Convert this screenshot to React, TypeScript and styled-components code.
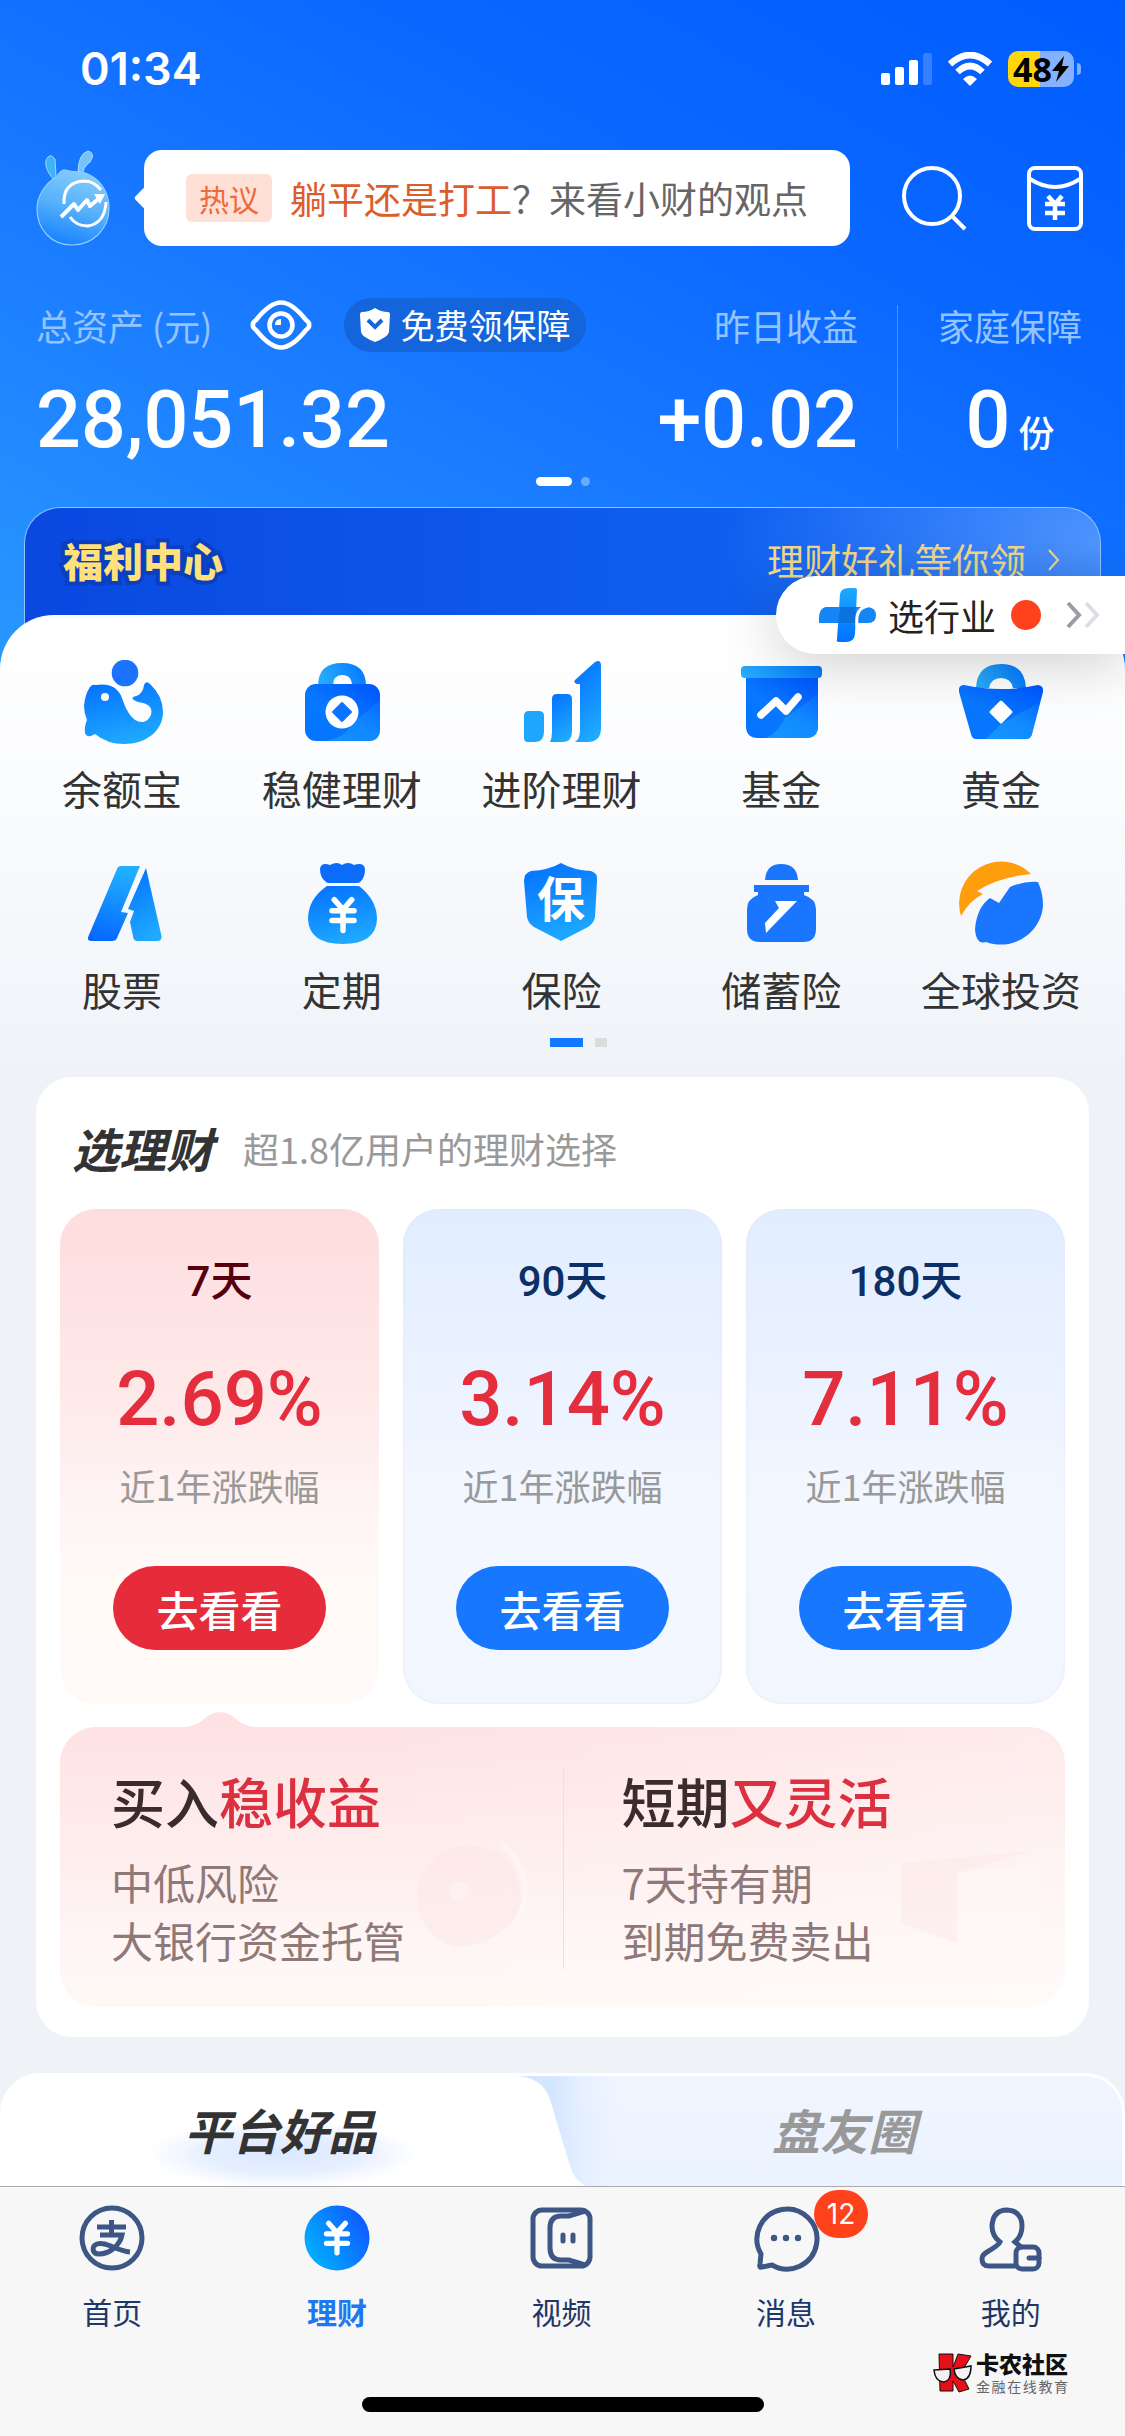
import React from 'react';
import styled, { createGlobalStyle, css } from 'styled-components';

const cjk = '"Noto Sans CJK SC", "Noto Sans", sans-serif';
const digits = 'Roboto, "Noto Sans CJK SC", sans-serif';

const GlobalStyle = createGlobalStyle`
  * { box-sizing: border-box; }
  body { margin: 0; background: #eff3f8; font-family: ${cjk}; color: #333; }
  button { font: inherit; color: inherit; border: 0; padding: 0; background: none; cursor: pointer; }
  a { color: inherit; text-decoration: none; }
  h2, h3, p { margin: 0; font-weight: inherit; }
  svg { display: block; flex: none; }
`;

const Page = styled.div`
  position: relative;
  min-height: 100vh;
  display: flex;
  flex-direction: column;
`;

/* ---------- header ---------- */

const Header = styled.header`
  background: linear-gradient(208deg, #005cff 0%, #0a68ff 32%, #1878ff 58%, #2a98ff 100%);
  color: #fff;
`;

const StatusBar = styled.div`
  height: 138px;
  padding: 0 44px 0 80px;
  display: flex;
  align-items: center;
  justify-content: space-between;
`;

const Clock = styled.span`
  font: 600 45px/48px Inter, sans-serif;
`;

const StatusIcons = styled.div`
  display: flex;
  align-items: center;
  gap: 15px;
`;

const Battery = styled.span`
  display: flex;
  align-items: center;
  gap: 3px;
  &::after {
    content: '';
    width: 4px;
    height: 12px;
    border-radius: 0 6px 6px 0;
    background: #7fb0ff;
  }
`;

const BatteryBody = styled.span`
  width: 66px;
  height: 36px;
  border-radius: 10px;
  display: flex;
  align-items: center;
  justify-content: center;
  background: linear-gradient(90deg, #ffd60a 48%, #86b1ff 48%);
  color: #000;
  font: 700 34px/36px "Open Sans", sans-serif;
`;

const TopRow = styled.div`
  margin-top: 12px;
  padding: 0 44px 0 36px;
  display: flex;
  align-items: center;
`;

const Bubble = styled.a`
  position: relative;
  flex: 1;
  height: 96px;
  margin: 0 52px 0 34px;
  padding: 0 42px;
  border-radius: 18px;
  background: #fff;
  display: flex;
  align-items: center;
  gap: 18px;
  font-size: 37px;
  line-height: 48px;
  color: #666;
  white-space: nowrap;
  &::before {
    content: '';
    position: absolute;
    left: -7px;
    top: 40px;
    width: 16px;
    height: 16px;
    border-radius: 3px;
    background: #fff;
    transform: rotate(45deg);
  }
`;

const HotTag = styled.span`
  width: 86px;
  height: 48px;
  border-radius: 6px;
  background: #ffe0d6;
  color: #ef6a3a;
  font-size: 30px;
  text-align: center;
`;

const Hot = styled.span`
  color: #db5d2c;
`;

const IconButton = styled.button`
  display: block;
  & + & { margin-left: 60px; }
`;

const Assets = styled.section`
  margin-top: 52px;
  padding: 0 43px 0 36px;
  display: flex;
`;

const AssetColumn = styled.div<{ $align?: string; $grow?: boolean }>`
  display: flex;
  flex-direction: column;
  gap: 32px;
  align-items: ${(p) => p.$align ?? 'flex-start'};
  ${(p) => p.$grow && css`flex: 1;`}
`;

const LabelRow = styled.div`
  height: 54px;
  display: flex;
  align-items: center;
  font-size: 36px;
  line-height: 54px;
  white-space: nowrap;
`;

const AssetLabel = styled.span`
  color: #94c4ff;
`;

const EyeButton = styled.button`
  margin: 0 32px 0 38px;
`;

const Protect = styled.a`
  height: 54px;
  padding: 0 16px;
  border-radius: 27px;
  background: #1465dc;
  display: flex;
  align-items: center;
  gap: 10px;
  font-size: 34px;
`;

const Amount = styled.div`
  height: 72px;
  font: 500 79px/72px ${digits};
  display: flex;
  align-items: baseline;
  gap: 8px;
`;

const Unit = styled.span`
  font-size: 36px;
`;

const AssetDivider = styled.div`
  width: 1px;
  height: 144px;
  margin: 7px 40px 0 39px;
  background: #4a90ff;
`;

const HeaderDots = styled.div`
  height: 9px;
  margin: 21px 0;
  display: flex;
  justify-content: center;
  gap: 9px;
`;

const HeaderDot = styled.i<{ $active?: boolean }>`
  width: ${(p) => (p.$active ? 36 : 9)}px;
  height: 9px;
  border-radius: 5px;
  background: ${(p) => (p.$active ? '#fff' : '#6aaaff')};
`;

const Banner = styled.a`
  height: 168px;
  margin: 0 24px;
  padding: 24px 40px 0 38px;
  border: 1px solid #8cc4ff;
  border-bottom: 0;
  border-radius: 36px 36px 0 0;
  background:
    radial-gradient(ellipse 380px 200px at 100% 20%, #4f96ff 0%, #2f7bf9 45%, transparent 100%),
    linear-gradient(90deg, #0a48e0 0%, #0f5dee 60%, #0f62f2 100%);
  display: flex;
  align-items: flex-start;
  justify-content: space-between;
`;

const BannerTitle = styled.h2`
  font-size: 40px;
  line-height: 56px;
  font-weight: 900;
  color: #ffe07a;
  -webkit-text-stroke: 8px #0a3fbf;
  paint-order: stroke fill;
`;

const BannerMore = styled.span`
  display: flex;
  align-items: center;
  gap: 22px;
  font-size: 37px;
  line-height: 56px;
  color: #f2d888;
`;

const FloatPill = styled.a`
  position: absolute;
  top: 576px;
  right: 0;
  height: 78px;
  padding: 0 24px 0 42px;
  border-radius: 39px 0 0 39px;
  background: #fff;
  box-shadow: 0 8px 60px rgba(0, 0, 0, 0.2);
  display: flex;
  align-items: center;
  font-size: 36px;
  line-height: 48px;
  color: #222;
`;

const PillText = styled.span`
  margin: 0 15px 0 11px;
`;

const RedDot = styled.i`
  width: 30px;
  height: 30px;
  margin-right: 24px;
  border-radius: 50%;
  background: #ff411c;
`;

/* ---------- shortcuts ---------- */

const Shortcuts = styled.section`
  margin-top: -60px;
  padding: 45px 14px 30px 12px;
  border-radius: 54px 54px 0 0;
  background: linear-gradient(180deg, #fff 0%, #fbfcfe 35%, #eff3f8 100%);
`;

const ShortcutGrid = styled.nav`
  display: grid;
  grid-template-columns: repeat(5, 1fr);
  row-gap: 49px;
`;

const Shortcut = styled.a`
  display: flex;
  flex-direction: column;
  align-items: center;
  gap: 20px;
  font-size: 40px;
  line-height: 48px;
  color: #333;
  white-space: nowrap;
`;

const Pager = styled.div`
  margin-top: 25px;
  padding-left: 34px;
  display: flex;
  justify-content: center;
  gap: 12px;
`;

const PagerMark = styled.i<{ $active?: boolean }>`
  width: ${(p) => (p.$active ? 33 : 12)}px;
  height: 9px;
  background: ${(p) => (p.$active ? '#1178ff' : '#dcdcdc')};
`;

/* ---------- picks card ---------- */

const Card = styled.section`
  margin: 0 36px;
  padding: 36px 24px 30px;
  border-radius: 36px;
  background: #fff;
`;

const CardHead = styled.div`
  height: 70px;
  margin-bottom: 26px;
  padding-left: 12px;
  display: flex;
  align-items: center;
  gap: 30px;
`;

const CardTitle = styled.h2`
  font-size: 47px;
  line-height: 56px;
  font-weight: 700;
  font-style: italic;
`;

const CardNote = styled.p`
  font-size: 36px;
  line-height: 48px;
  color: #999;
`;

const Terms = styled.div`
  display: grid;
  grid-template-columns: repeat(3, 1fr);
  gap: 24px;
`;

const Term = styled.article<{ $hot?: boolean }>`
  padding: 49px 0 54px;
  border-radius: 36px;
  background: ${(p) =>
    p.$hot
      ? 'linear-gradient(180deg, #fedddf 0%, #fee8e8 35%, #fef6f6 64%, #fffaf6 75%, #fffaf8 100%)'
      : 'linear-gradient(180deg, #e1edff 0%, #ebf2ff 32%, #f3f7ff 60%, #f2f6ff 100%)'};
  box-shadow: ${(p) => (p.$hot ? 'none' : 'inset 0 0 3px #dde5f4')};
  display: flex;
  flex-direction: column;
  align-items: center;
  color: ${(p) => (p.$hot ? '#55000c' : '#0b2f66')};
`;

const TermDays = styled.h3`
  font: 500 42px/48px ${digits};
`;

const TermRate = styled.p`
  margin: 57px 0 26px;
  font: 500 76px/72px ${digits};
  color: #e52e3d;
`;

const TermNote = styled.p`
  font-size: 36px;
  line-height: 48px;
  color: #999;
`;

const TermButton = styled.button<{ $hot?: boolean }>`
  width: 213px;
  height: 84px;
  margin-top: 57px;
  border-radius: 42px;
  background: ${(p) => (p.$hot ? '#e62c3b' : '#1777ff')};
  color: #fff;
  font-size: 42px;
  font-weight: 500;
`;

const Features = styled.div`
  position: relative;
  margin-top: 23px;
  padding: 42px 0 38px;
  border-radius: 36px;
  background:
    linear-gradient(90deg, rgba(255, 255, 255, 0) 30%, rgba(255, 255, 255, 0.3) 100%),
    linear-gradient(180deg, #fee2e3 0%, #feebeb 35%, #fef5f4 75%, #fff9f6 100%);
  display: grid;
  grid-template-columns: 1fr 1fr;
`;

const FeatureNotch = styled.svg`
  position: absolute;
  left: 118px;
  top: -15px;
`;

const Feature = styled.div`
  position: relative;
  padding-left: 51px;
  & + & {
    padding-left: 58px;
    border-left: 1px solid #f3dcdc;
  }
`;

const FeatureArt = styled.svg`
  position: absolute;
  right: 24px;
  top: 34px;
`;

const FeatureTitle = styled.h3`
  margin-bottom: 20px;
  font-size: 54px;
  line-height: 64px;
  font-weight: 500;
  color: #3a2c2c;
`;

const Accent = styled.span`
  color: #dc2f40;
`;

const FeatureLine = styled.p`
  font-size: 42px;
  line-height: 58px;
  color: #8f7878;
`;

/* ---------- tabs ---------- */

const Tabs = styled.div`
  flex: 1;
  min-height: 113px;
  margin-top: 36px;
  border: solid #fff;
  border-width: 3px 3px 0 0;
  border-radius: 40px 40px 0 0;
  background: linear-gradient(180deg, #f1f5ff 0%, #ebf3ff 100%);
  display: flex;
`;

const Tab = styled.button<{ $active?: boolean }>`
  font-size: 48px;
  font-weight: 700;
  font-style: italic;
  padding-bottom: 4px;
  ${(p) =>
    p.$active
      ? css`
          flex: 0 0 518px;
          padding-left: 42px;
          border-radius: 37px 0 0 0;
          color: #333;
          background: radial-gradient(ellipse 136px 34px at 282px 78px, #dbe8ff 0%, #e6efff 55%, #fff 100%) #fff;
        `
      : css`
          flex: 1;
          padding-right: 62px;
          color: #999;
        `}
`;

/* ---------- bottom bar ---------- */

const BottomBar = styled.footer`
  position: relative;
  height: 250px;
  padding-top: 17px;
  border-top: 1px solid #a9a9ae;
  background: #f7f7f7;
`;

const NavRow = styled.nav`
  padding-right: 2px;
  display: grid;
  grid-template-columns: repeat(5, 1fr);
`;

const NavItem = styled.a<{ $active?: boolean }>`
  position: relative;
  display: flex;
  flex-direction: column;
  align-items: center;
  gap: 21px;
  font-size: 30px;
  line-height: 36px;
  font-weight: ${(p) => (p.$active ? 700 : 400)};
  color: ${(p) => (p.$active ? '#1e78f0' : '#1f3766')};
`;

const Badge = styled.span`
  position: absolute;
  left: calc(50% + 28px);
  top: -14px;
  width: 54px;
  height: 48px;
  border-radius: 24px;
  background: #ff411c;
  color: #fff;
  font: 400 28px/48px Inter, sans-serif;
  text-align: center;
`;

const HomeBar = styled.div`
  width: 402px;
  height: 15px;
  margin: 68px auto 0;
  border-radius: 8px;
  background: #000;
`;

const Watermark = styled.div`
  position: absolute;
  right: 57px;
  bottom: 40px;
  display: flex;
  align-items: center;
  gap: 4px;
  color: #111;
`;

const WatermarkName = styled.div`
  font-size: 23px;
  line-height: 26px;
  font-weight: 900;
`;

const WatermarkNote = styled.div`
  font-size: 14px;
  line-height: 20px;
  color: #666;
  text-align: justify;
  text-align-last: justify;
`;

/* ---------- drawings ---------- */

const Yen = ({ x, y, s = 1, w = 5, color = '#fff' }: { x: number; y: number; s?: number; w?: number; color?: string }) => (
  <g transform={`translate(${x} ${y}) scale(${s})`} stroke={color} strokeWidth={w} fill="none" strokeLinecap="round">
    <path d="M-8 -13 L0 -4 L8 -13 M0 -4 V15 M-10 -3 H10 M-10 6 H10" />
  </g>
);

const Mascot = () => (
  <svg width="74" height="96" viewBox="0 0 74 96">
    <defs>
      <linearGradient id="mascot" x1="0.6" y1="0" x2="0.3" y2="1">
        <stop offset="0" stopColor="#86cdfb" />
        <stop offset="0.5" stopColor="#55b0fb" />
        <stop offset="1" stopColor="#1480ff" />
      </linearGradient>
    </defs>
    <path d="M20 32 Q8 20 10 10 Q14 2 19 9 Q20 20 20 32Z" fill="#3eb4f5" stroke="#9ad8ff" />
    <path d="M42 23 Q42 4 52 1 Q60 3 54 12 Q46 18 47 25Z" fill="#75c3f8" stroke="#a9dcff" />
    <path d="M20 27 Q26 19 29 20 Q36 22 46 22 C62 26 73 40 73 58 C73 80 56 95 36 95 C15 95 1 79 1 59 C1 46 9 34 20 27Z" fill="url(#mascot)" stroke="#8fd0ff" strokeWidth="1.2" />
    <path d="M28 54 Q27 32 48 31 Q58 31 65 40 M34 67 Q40 76 52 76 Q69 73 70 52" fill="none" stroke="#fff" strokeWidth="3" />
    <path d="M25 67 L38 54 L42 60 L51 50 L54 56 L66 46" fill="none" stroke="#fff" strokeWidth="4" strokeLinejoin="round" />
    <path d="M58 44 L69 44 L64 54Z" fill="#fff" />
  </svg>
);

const Signal = () => (
  <svg width="51" height="32" viewBox="0 0 51 32" fill="#fff">
    <rect x="0" y="20" width="9" height="12" rx="2" />
    <rect x="14" y="14" width="9" height="18" rx="2" />
    <rect x="28" y="7" width="9" height="25" rx="2" />
    <rect x="42" y="0" width="9" height="32" rx="2" opacity="0.2" />
  </svg>
);

const Wifi = () => (
  <svg width="46" height="34" viewBox="0 0 46 34">
    <path d="M3 12 Q23 -6 43 12 M10.500 20 Q23 8 35.500 20" fill="none" stroke="#fff" strokeWidth="6.500" />
    <path d="M16 27 Q23 20 30 27 L23 34Z" fill="#fff" />
  </svg>
);

const Bolt = () => (
  <svg width="17" height="28" viewBox="0 0 17 28">
    <path d="M12 1 L0 16 H7 L4 27 L17 11 H10Z" fill="#000" />
  </svg>
);

const SearchIcon = () => (
  <svg width="65" height="65" viewBox="0 0 65 65" fill="none" stroke="#fff" strokeWidth="4">
    <circle cx="30" cy="30" r="28" />
    <path d="M50 50 L63 63" />
  </svg>
);

const WalletIcon = () => (
  <svg width="56" height="65" viewBox="0 0 56 65" fill="none" stroke="#fff" strokeWidth="4">
    <rect x="2" y="2" width="52" height="61" rx="6" />
    <path d="M3 13 Q28 29 53 13" />
    <path d="M21 30 L28 38 L35 30 M28 38 V54 M18 38 H38 M18 47 H38" strokeWidth="4.500" />
  </svg>
);

const EyeIcon = () => (
  <svg width="62" height="50" viewBox="0 0 62 50" fill="none" stroke="#fff" strokeWidth="4.500">
    <path d="M3 25 Q2 23 6 20 Q20 2.500 31 2.500 Q42 2.500 56 20 Q60 23 59 25 Q60 27 56 30 Q42 47.500 31 47.500 Q20 47.500 6 30 Q2 27 3 25Z" />
    <circle cx="31" cy="25" r="11.500" />
    <path d="M25 25 Q25 19 31 19 V25Z" fill="#fff" stroke="none" />
  </svg>
);

const ShieldIcon = () => (
  <svg width="30" height="34" viewBox="0 0 30 34">
    <path d="M15 0 Q21 4 28 4 Q30 4 30 7 L29 24 Q28 29 15 34 Q2 29 1 24 L0 7 Q0 4 2 4 Q9 4 15 0Z" fill="#fff" />
    <path d="M8 12 L15 19 L22 12" fill="none" stroke="#1465dc" strokeWidth="4" />
  </svg>
);

const ChevronIcon = () => (
  <svg width="12" height="22" viewBox="0 0 12 22">
    <path d="M1 1 L10 11 L1 21" fill="none" stroke="#f2d888" strokeWidth="2" />
  </svg>
);

const DoubleChevron = () => (
  <svg width="36" height="28" viewBox="0 0 36 28" fill="none" strokeWidth="4">
    <path d="M3 2 L14 14 L3 26" stroke="#999ca3" />
    <path d="M21 2 L32 14 L21 26" stroke="#dcdee3" />
  </svg>
);

const PlusLogo = () => (
  <svg width="59" height="54" viewBox="0 0 59 54">
    <defs>
      <linearGradient id="plusV" x1="0" y1="0" x2="0" y2="1">
        <stop offset="0" stopColor="#1eaaff" />
        <stop offset="1" stopColor="#0070ff" />
      </linearGradient>
    </defs>
    <path d="M8 19 H50 Q58 20 58 27 Q58 35 50 35 H1 Q0 20 8 19Z" fill="#1585f5" />
    <path d="M22 6 Q23 0 31 0 H37 Q39 0 39 2 L37 46 Q36 54 28 54 H21 Q18 54 19 51Z" fill="url(#plusV)" />
    <path d="M22 19 H38 L37 35 H20Z" fill="#0a73e0" />
    <path d="M39 37 Q37 20 50 18" fill="none" stroke="#fff" strokeWidth="3" />
  </svg>
);

const IconDefs = () => (
  <svg width="0" height="0" style={{ position: 'absolute' }} aria-hidden="true">
    <defs>
      <linearGradient id="down" x1="0.3" y1="0" x2="0.6" y2="1">
        <stop offset="0" stopColor="#0574ff" />
        <stop offset="1" stopColor="#1fabff" />
      </linearGradient>
      <linearGradient id="up" x1="0.4" y1="0" x2="0.2" y2="1">
        <stop offset="0" stopColor="#20b0ff" />
        <stop offset="1" stopColor="#0566ff" />
      </linearGradient>
      <linearGradient id="deep" x1="1" y1="0" x2="0.2" y2="1">
        <stop offset="0" stopColor="#0055ff" />
        <stop offset="0.6" stopColor="#0878ff" />
        <stop offset="1" stopColor="#0574ff" />
      </linearGradient>
      <linearGradient id="light" x1="0" y1="0.5" x2="1" y2="0.3">
        <stop offset="0" stopColor="#27acfb" />
        <stop offset="1" stopColor="#0578ff" />
      </linearGradient>
      <linearGradient id="glow" x1="0" y1="1" x2="1" y2="0">
        <stop offset="0" stopColor="#1ea6ff" />
        <stop offset="0.6" stopColor="#1490ff" />
        <stop offset="1" stopColor="#0a70ff" />
      </linearGradient>
      <linearGradient id="coin" x1="0" y1="0.8" x2="1" y2="0.2">
        <stop offset="0" stopColor="#00b4ff" />
        <stop offset="1" stopColor="#1056ff" />
      </linearGradient>
    </defs>
  </svg>
);

const Glyph = ({ children }: { children: React.ReactNode }) => (
  <svg width="84" height="84" viewBox="0 0 84 84" aria-hidden="true">
    {children}
  </svg>
);

const shortcuts = [
  {
    label: '余额宝',
    art: (
      <>
        <circle cx="45" cy="13" r="13.300" fill="#1a72ff" />
        <path d="M16 25 Q36 22 42 38 C46 50 52 62 62 62 C69 62 74 53 70 47 Q67 43 58 42 Q48 38 56 36 Q63 34 64 25 Q66 20 70 24 Q83 36 83 52 C83 71 66 84 44 84 Q27 84 15 74 Q7 79 5 73 Q4 67 7 60 Q4 53 4 46 Q5 34 10 27 Q12 24 16 25Z" fill="url(#down)" />
        <circle cx="25" cy="37" r="4" fill="#fff" />
      </>
    ),
  },
  {
    label: '稳健理财',
    art: (
      <>
        <path d="M18 26 Q18 3 42 3 Q66 3 66 26 H52 Q52 15 42 15 Q33 15 33 26Z" fill="url(#light)" />
        <rect x="5" y="24" width="75" height="57" rx="11" fill="url(#deep)" />
        <path d="M25 81 Q45 78 52 64 L80 40 V70 Q80 81 69 81Z" fill="url(#glow)" opacity="0.6" />
        <circle cx="42" cy="52" r="16.500" fill="#fff" />
        <path d="M42 43 L51 52 L42 61 L33 52Z" fill="#0b74ff" stroke="#0b74ff" strokeWidth="2" strokeLinejoin="round" />
      </>
    ),
  },
  {
    label: '进阶理财',
    art: (
      <>
        <path d="M10 51 H20 Q25 51 25 56 V72 Q25 82 15 82 H9 Q5 82 5 78 V56 Q5 51 10 51Z" fill="#1ea6ff" />
        <path d="M38 34 H48 Q53 34 53 39 V72 Q53 82 43 82 H31 Q33 78 33 72 V39 Q33 34 38 34Z" fill="url(#down)" />
        <path d="M56 20 L76 2 Q82 -1 82 6 V68 Q82 82 68 82 H56 Q61 79 61 70 V24 H58 Q54 23 56 20Z" fill="url(#down)" />
      </>
    ),
  },
  {
    label: '基金',
    art: (
      <>
        <path d="M7 16 H79 V66 Q79 78 67 78 H19 Q7 78 7 66Z" fill="url(#deep)" />
        <path d="M26 78 Q36 76 46 58 L79 34 V66 Q79 78 67 78Z" fill="url(#glow)" opacity="0.7" />
        <rect x="2" y="6" width="81" height="12" rx="4" fill="url(#light)" />
        <path d="M22 55 L37 41 L47 51 L59 37" fill="none" stroke="#fff" strokeWidth="7.500" strokeLinecap="round" strokeLinejoin="round" />
      </>
    ),
  },
  {
    label: '黄金',
    art: (
      <>
        <path d="M17 28 Q18 4 42 4 Q66 4 67 28 H54 Q52 18 42 18 Q32 18 30 28Z" fill="url(#light)" />
        <path d="M5 25 Q42 33 79 25 Q85 26 84 32 L73 74 Q72 79 67 79 H17 Q13 79 12 74 L0 32 Q-1 25 5 25Z" fill="url(#deep)" />
        <path d="M27 79 L42 64 L81 42 L73 74 Q72 79 67 79Z" fill="url(#glow)" opacity="0.7" />
        <path d="M42 42 L52 52 L42 62 L32 52Z" fill="#fff" stroke="#fff" strokeWidth="3" strokeLinejoin="round" />
      </>
    ),
  },
  {
    label: '股票',
    art: (
      <>
        <path d="M41 5 H60 L41 51 L48 52 L37 77 Q36 80 32 80 H12 Q6 80 8.500 75 L37 8 Q38 5 41 5Z" fill="url(#up)" />
        <path d="M66 7 L81.500 75 Q82 80 77 80 H58 Q53 80 53 75 L50 61 L54 50 L48 48Z" fill="url(#down)" />
      </>
    ),
  },
  {
    label: '定期',
    art: (
      <>
        <path d="M20 8 Q21 1 30 4 Q37 0 42 4 Q48 0 54 4 Q64 1 65 8 Q65 16 61 20 Q60 22 57 22 H29 Q26 22 25 20 Q20 16 20 8Z" fill="#0a6cf8" />
        <path d="M27 25 H59 Q77 39 77 58 Q76 83 43 83 Q9 83 8 58 Q8 38 27 25Z" fill="url(#down)" />
        <Yen x={43} y={53} s={1.100} />
      </>
    ),
  },
  {
    label: '保险',
    art: (
      <>
        <path d="M42 2 Q54 9 72 10 Q79 12 78 20 L76 56 Q75 62 69 66 L42 80 L15 66 Q9 62 8 56 L5 20 Q5 12 12 10 Q30 9 42 2Z" fill="url(#down)" />
        <text x="42" y="56" textAnchor="middle" fontSize="48" fontWeight="700" fill="#fff" fontFamily={cjk}>保</text>
      </>
    ),
  },
  {
    label: '储蓄险',
    art: (
      <g fill="#1a76ff">
        <path d="M26 19 Q27 3 42 3 Q58 3 59 19Z" />
        <path d="M15 24 H70 V31 H65 V34 Q77 38 77 48 V68 Q77 81 64 81 H21 Q8 81 8 68 V48 Q8 38 19 34 V31 H15Z" />
        <path d="M36 40 H58 L27 72 L26 62 L40 47Z" fill="#fff" />
      </g>
    ),
  },
  {
    label: '全球投资',
    art: (
      <>
        <path d="M2 55 A42 42 0 0 1 72 13 Q40 16 18 30 L24 33 Q10 40 2 55Z" fill="#ff9e0d" />
        <path d="M51 26 Q64 20 79 21 Q84 32 84 44 C83 70 56 91 27 81 Q17 84 16 68 Q18 46 31 37 L40 42Z" fill="#1a76ff" />
      </>
    ),
  },
];

const NavGlyph = ({ children }: { children: React.ReactNode }) => (
  <svg width="68" height="68" viewBox="0 0 68 68" fill="none" stroke="#3d5685" strokeWidth="5" aria-hidden="true">
    {children}
  </svg>
);

const navItems = [
  {
    label: '首页',
    art: (
      <>
        <circle cx="34" cy="34" r="30" />
        <path d="M19 23 H48 M33.500 16 V30 M22 31 H44 C42 41 32 50 21 50 C14 50 13 42 19 40 C28 37 38 47 52 48" />
      </>
    ),
  },
  {
    label: '理财',
    active: true,
    art: (
      <>
        <circle cx="34" cy="34" r="32.500" fill="url(#coin)" stroke="none" />
        <Yen x={34} y={33} s={1.050} w={5} />
      </>
    ),
  },
  {
    label: '视频',
    art: (
      <>
        <rect x="6" y="6" width="57" height="56" rx="9" />
        <path d="M58 7 L42 12 H34 Q23 12 23 24 V44 Q23 56 34 56 H42 L58 61" />
        <path d="M36 31 V37 M46 31 V37" strokeLinecap="round" />
      </>
    ),
  },
  {
    label: '消息',
    badge: '12',
    art: (
      <>
        <path d="M9 50 A30 30 0 1 1 20 61 L10 63 Q7 64 8 60Z" strokeLinejoin="round" />
        <g fill="#3d5685" stroke="none">
          <circle cx="22" cy="34" r="3.200" />
          <circle cx="34" cy="34" r="3.200" />
          <circle cx="46" cy="34" r="3.200" />
        </g>
      </>
    ),
  },
  {
    label: '我的',
    art: (
      <>
        <path d="M38 62 H12 Q5 62 5 55 Q5 51 10 48 Q22 41 23 38 Q15 32 15 22 Q16 6 30 6 Q45 7 45 22 Q45 32 38 38 L44 43" strokeLinecap="round" />
        <rect x="39" y="43" width="23" height="22" rx="6" />
        <path d="M62 54 H52" strokeLinecap="round" />
      </>
    ),
  },
];

const terms = [
  { days: '7天', rate: '2.69%', hot: true },
  { days: '90天', rate: '3.14%' },
  { days: '180天', rate: '7.11%' },
];

const TabEdge = () => (
  <svg width="110" height="110" viewBox="0 0 110 110">
    <defs>
      <linearGradient id="edge" x1="0" y1="0" x2="1" y2="0">
        <stop offset="0.3" stopColor="#d3e5ff" />
        <stop offset="1" stopColor="#eff5ff" stopOpacity="0" />
      </linearGradient>
    </defs>
    <path d="M0 0 H110 V110 H0Z" fill="url(#edge)" />
    <path d="M0 0 Q28 2 34 30 L52 90 Q56 104 68 110 H0Z" fill="#fff" />
  </svg>
);

export default function App() {
  return (
    <Page>
      <GlobalStyle />
      <IconDefs />
      <Header>
        <StatusBar>
          <Clock>01:34</Clock>
          <StatusIcons>
            <Signal />
            <Wifi />
            <Battery>
              <BatteryBody>48<Bolt /></BatteryBody>
            </Battery>
          </StatusIcons>
        </StatusBar>
        <TopRow>
          <Mascot />
          <Bubble href="#topic">
            <HotTag>热议</HotTag>
            <span><Hot>躺平还是打工</Hot>？来看小财的观点</span>
          </Bubble>
          <IconButton aria-label="搜索"><SearchIcon /></IconButton>
          <IconButton aria-label="钱包"><WalletIcon /></IconButton>
        </TopRow>
        <Assets>
          <AssetColumn $grow>
            <LabelRow>
              <AssetLabel>总资产 (元)</AssetLabel>
              <EyeButton aria-label="隐藏金额"><EyeIcon /></EyeButton>
              <Protect href="#protect"><ShieldIcon />免费领保障</Protect>
            </LabelRow>
            <Amount>28,051.32</Amount>
          </AssetColumn>
          <AssetColumn $align="flex-end">
            <LabelRow><AssetLabel>昨日收益</AssetLabel></LabelRow>
            <Amount>+0.02</Amount>
          </AssetColumn>
          <AssetDivider />
          <AssetColumn $align="center">
            <LabelRow><AssetLabel>家庭保障</AssetLabel></LabelRow>
            <Amount>0<Unit>份</Unit></Amount>
          </AssetColumn>
        </Assets>
        <HeaderDots>
          <HeaderDot $active />
          <HeaderDot />
        </HeaderDots>
        <Banner href="#welfare">
          <BannerTitle>福利中心</BannerTitle>
          <BannerMore>理财好礼等你领<ChevronIcon /></BannerMore>
        </Banner>
      </Header>

      <Shortcuts>
        <ShortcutGrid>
          {shortcuts.map((s) => (
            <Shortcut key={s.label} href="#shortcut">
              <Glyph>{s.art}</Glyph>
              {s.label}
            </Shortcut>
          ))}
        </ShortcutGrid>
        <Pager>
          <PagerMark $active />
          <PagerMark />
        </Pager>
      </Shortcuts>

      <Card>
        <CardHead>
          <CardTitle>选理财</CardTitle>
          <CardNote>超1.8亿用户的理财选择</CardNote>
        </CardHead>
        <Terms>
          {terms.map((t) => (
            <Term key={t.days} $hot={t.hot}>
              <TermDays>{t.days}</TermDays>
              <TermRate>{t.rate}</TermRate>
              <TermNote>近1年涨跌幅</TermNote>
              <TermButton $hot={t.hot}>去看看</TermButton>
            </Term>
          ))}
        </Terms>
        <Features>
          <FeatureNotch width="84" height="16" viewBox="0 0 84 16">
            <path d="M0 16 Q18 15 26 7 Q42 -7 58 7 Q66 15 84 16Z" fill="#fee2e3" />
          </FeatureNotch>
          <Feature>
            <FeatureArt width="130" height="150" viewBox="0 0 130 150">
              <ellipse cx="60" cy="94" rx="52" ry="52" fill="#fbdcdc" opacity="0.25" />
              <path d="M92 40 Q126 70 112 108 Q96 142 50 146" fill="none" stroke="#fff" strokeWidth="5" opacity="0.35" />
              <circle cx="50" cy="88" r="10" fill="#fff" opacity="0.25" />
            </FeatureArt>
            <FeatureTitle>买入<Accent>稳收益</Accent></FeatureTitle>
            <FeatureLine>中低风险</FeatureLine>
            <FeatureLine>大银行资金托管</FeatureLine>
          </Feature>
          <Feature>
            <FeatureArt width="140" height="150" viewBox="0 0 140 150">
              <path d="M0 60 L130 48 L56 70 V140 L0 120Z" fill="#fbdcdc" opacity="0.25" />
              <path d="M56 70 L140 60 V130 L56 140Z" fill="#fff" opacity="0.2" />
            </FeatureArt>
            <FeatureTitle>短期<Accent>又灵活</Accent></FeatureTitle>
            <FeatureLine>7天持有期</FeatureLine>
            <FeatureLine>到期免费卖出</FeatureLine>
          </Feature>
        </Features>
      </Card>

      <Tabs>
        <Tab $active>平台好品</Tab>
        <TabEdge />
        <Tab>盘友圈</Tab>
      </Tabs>

      <BottomBar>
        <NavRow>
          {navItems.map((n) => (
            <NavItem key={n.label} href="#nav" $active={n.active}>
              <NavGlyph>{n.art}</NavGlyph>
              {n.label}
              {n.badge && <Badge>{n.badge}</Badge>}
            </NavItem>
          ))}
        </NavRow>
        <HomeBar />
        <Watermark>
          <svg width="39" height="40" viewBox="0 0 39 40">
            <path d="M6 1 H20 V14 L25 1 L38 3 L28 20 L36 36 L26 39 L20 28 V38 H7Z" fill="#e60f1a" stroke="#111" strokeWidth="1" />
            <path d="M1 17 L17 16 Q19 28 10 29 Q2 28 1 17Z M21 16 L38 13 Q38 26 30 27 Q22 26 21 16Z" fill="#f2f2f2" stroke="#111" strokeWidth="1.500" />
          </svg>
          <div>
            <WatermarkName>卡农社区</WatermarkName>
            <WatermarkNote>金融在线教育</WatermarkNote>
          </div>
        </Watermark>
      </BottomBar>

      <FloatPill href="#industry">
        <PlusLogo />
        <PillText>选行业</PillText>
        <RedDot />
        <DoubleChevron />
      </FloatPill>
    </Page>
  );
}
